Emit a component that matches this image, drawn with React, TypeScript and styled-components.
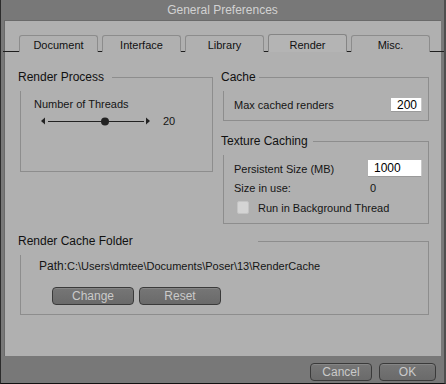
import React from 'react';
import styled, { createGlobalStyle } from 'styled-components';

const GlobalStyle = createGlobalStyle`
  html, body {
    margin: 0;
    padding: 0;
    background: #787878;
  }
  body {
    font-family: "Liberation Sans", Arial, sans-serif;
    font-size: 11px;
    color: #151515;
  }
`;

const Window = styled.div`
  width: 446px;
  height: 384px;
  box-sizing: border-box;
  background: #787878;
  border-left: 1px solid #2c2c2c;
  border-right: 2px solid #4e4e4e;
  border-bottom: 1px solid #111;
  display: flex;
  flex-direction: column;
  overflow: hidden;
`;

const TitleBar = styled.div`
  height: 20px;
  line-height: 21px;
  text-align: center;
  font-size: 12px;
  color: #d2d2d2;
`;

const Panel = styled.div`
  height: 336px;
  box-sizing: border-box;
  margin: 0 3px;
  background: #b0b0b0;
  border-top: 1px solid #6a6a6a;
  border-left: 1px solid #6a6a6a;
  padding: 13px 12px 0 14px;
`;

const TabStrip = styled.div`
  display: flex;
  align-items: flex-end;
  gap: 4px;
  height: 17px;
  margin: 0 -17px 0 -16px;
  padding-left: 16px;
  border-bottom: 1px solid #1e1e1e;
`;

const Tab = styled.div<{ $active?: boolean }>`
  position: relative;
  width: 79px;
  height: ${p => (p.$active ? 18 : 17)}px;
  margin-bottom: -1px;
  box-sizing: border-box;
  border: 1px solid ${p => (p.$active ? '#858585' : '#8c8c8c')};
  border-bottom: none;
  border-radius: 3px 3px 0 0;
  background: ${p => (p.$active ? '#b4b4b4' : '#b0b0b0')};
  text-align: center;
  line-height: ${p => (p.$active ? 20 : 18)}px;
  font-size: 11px;
  color: #111;
`;

const Body = styled.div`
  display: grid;
  grid-template-columns: 193px 206px;
  column-gap: 10px;
  padding-left: 1px;
  margin-top: 25px;
  align-items: start;
`;

const Stack = styled.div`
  display: flex;
  flex-direction: column;
  gap: 20px;
`;

const Group = styled.div<{ $h: number; $pt: number; $span?: boolean; $mt?: number }>`
  position: relative;
  height: ${p => p.$h}px;
  box-sizing: border-box;
  border: 1px solid #8d8d8d;
  padding: ${p => p.$pt}px 0 0 0;
  grid-column: ${p => (p.$span ? '1 / span 2' : 'auto')};
  margin-top: ${p => p.$mt ?? 0}px;
`;

const GroupTitle = styled.div<{ $pr: number }>`
  position: absolute;
  top: -10px;
  left: -4px;
  padding: 0 ${p => p.$pr}px 5px 1px;
  background: #b0b0b0;
  font-size: 12px;
  line-height: 18px;
  color: #111;
`;

const Label = styled.div`
  line-height: 14px;
  font-size: 11px;
`;

const SliderRow = styled.div`
  display: flex;
  align-items: center;
  gap: 12px;
  height: 14px;
  margin: 3px 0 0 7px;
`;

const Row = styled.div<{ $h?: number; $mt?: number }>`
  display: flex;
  align-items: center;
  height: ${p => p.$h ?? 14}px;
  margin-top: ${p => p.$mt ?? 0}px;
`;

const RowLabel = styled.div<{ $w: number }>`
  width: ${p => p.$w}px;
  flex: none;
  line-height: 14px;
`;

const Field = styled.div<{ $w: number; $h: number }>`
  width: ${p => p.$w}px;
  height: ${p => p.$h}px;
  box-sizing: border-box;
  background: #fff;
  border-right: 1px solid #c8c8c8;
  border-bottom: 1px solid #9a9a9a;
  padding-left: 6px;
  line-height: ${p => p.$h}px;
  font-size: 12px;
  color: #000;
`;

const Check = styled.div`
  width: 12px;
  height: 13px;
  margin: 0 9px 0 3px;
  box-sizing: border-box;
  border-radius: 2px;
  background: #d4d4d4;
  border: 1px solid #c4c4c4;
`;

const PathLine = styled.div`
  display: flex;
  align-items: baseline;
  height: 14px;
  line-height: 14px;
`;

const PathKey = styled.span`
  font-size: 12px;
`;

const PathValue = styled.span`
  font-size: 11px;
`;

const Buttons = styled.div<{ $gap: number }>`
  display: flex;
  gap: ${p => p.$gap}px;
`;

const Button = styled.div<{ $w: number }>`
  width: ${p => p.$w}px;
  height: 18px;
  box-sizing: border-box;
  border: 1px solid #3a3a3a;
  border-radius: 4px;
  background: linear-gradient(#767676, #6a6a6a);
  box-shadow: inset 0 1px 0 #858585;
  text-align: center;
  line-height: 16px;
  font-size: 12px;
  color: #cacaca;
`;

const Footer = styled.div`
  flex: 1;
  display: flex;
  justify-content: flex-end;
  padding: 7px 8px 0 0;
`;

function Slider() {
  return (
    <svg width="110" height="14" viewBox="0 0 110 14">
      <polygon points="0,7 4,3.5 4,10.5" fill="#222" />
      <line x1="7" y1="7.5" x2="103" y2="7.5" stroke="#222" strokeWidth="1" />
      <circle cx="64" cy="7.5" r="4" fill="#222" />
      <polygon points="109,7 105,3.5 105,10.5" fill="#222" />
    </svg>
  );
}

const TABS = ['Document', 'Interface', 'Library', 'Render', 'Misc.'];

export default function App() {
  return (
    <>
      <GlobalStyle />
      <Window>
        <TitleBar>General Preferences</TitleBar>
        <Panel>
          <TabStrip>
            {TABS.map(t => (
              <Tab key={t} $active={t === 'Render'}>{t}</Tab>
            ))}
          </TabStrip>
          <Body>
            <Group $h={95} $pt={19}>
              <GroupTitle $pr={8}>Render Process</GroupTitle>
              <div style={{ paddingLeft: 13 }}>
                <Label>Number of Threads</Label>
                <SliderRow>
                  <Slider />
                  <Label>20</Label>
                </SliderRow>
              </div>
            </Group>
            <Stack>
              <Group $h={44} $pt={20}>
                <GroupTitle $pr={3}>Cache</GroupTitle>
                <Row style={{ paddingLeft: 10 }}>
                  <RowLabel $w={157}>Max cached renders</RowLabel>
                  <Field $w={31} $h={14}>200</Field>
                </Row>
              </Group>
              <Group $h={83} $pt={18}>
                <GroupTitle $pr={5}>Texture Caching</GroupTitle>
                <div style={{ paddingLeft: 10 }}>
                  <Row $h={17}>
                    <RowLabel $w={134}>Persistent Size (MB)</RowLabel>
                    <Field $w={54} $h={17}>1000</Field>
                  </Row>
                  <Row $mt={4}>
                    <RowLabel $w={136}>Size in use:</RowLabel>
                    <Label>0</Label>
                  </Row>
                  <Row $h={13} $mt={6}>
                    <Check />
                    <Label>Run in Background Thread</Label>
                  </Row>
                </div>
              </Group>
            </Stack>
            <Group $h={74} $pt={17} $span $mt={17}>
              <GroupTitle $pr={125}>Render Cache Folder</GroupTitle>
              <div style={{ paddingLeft: 18 }}>
                <PathLine>
                  <PathKey>Path:</PathKey>
                  <PathValue>C:\Users\dmtee\Documents\Poser\13\RenderCache</PathValue>
                </PathLine>
                <div style={{ margin: '14px 0 0 13px' }}>
                  <Buttons $gap={5}>
                    <Button $w={82}>Change</Button>
                    <Button $w={82}>Reset</Button>
                  </Buttons>
                </div>
              </div>
            </Group>
          </Body>
        </Panel>
        <Footer>
          <Buttons $gap={7}>
            <Button $w={62}>Cancel</Button>
            <Button $w={57}>OK</Button>
          </Buttons>
        </Footer>
      </Window>
    </>
  );
}
